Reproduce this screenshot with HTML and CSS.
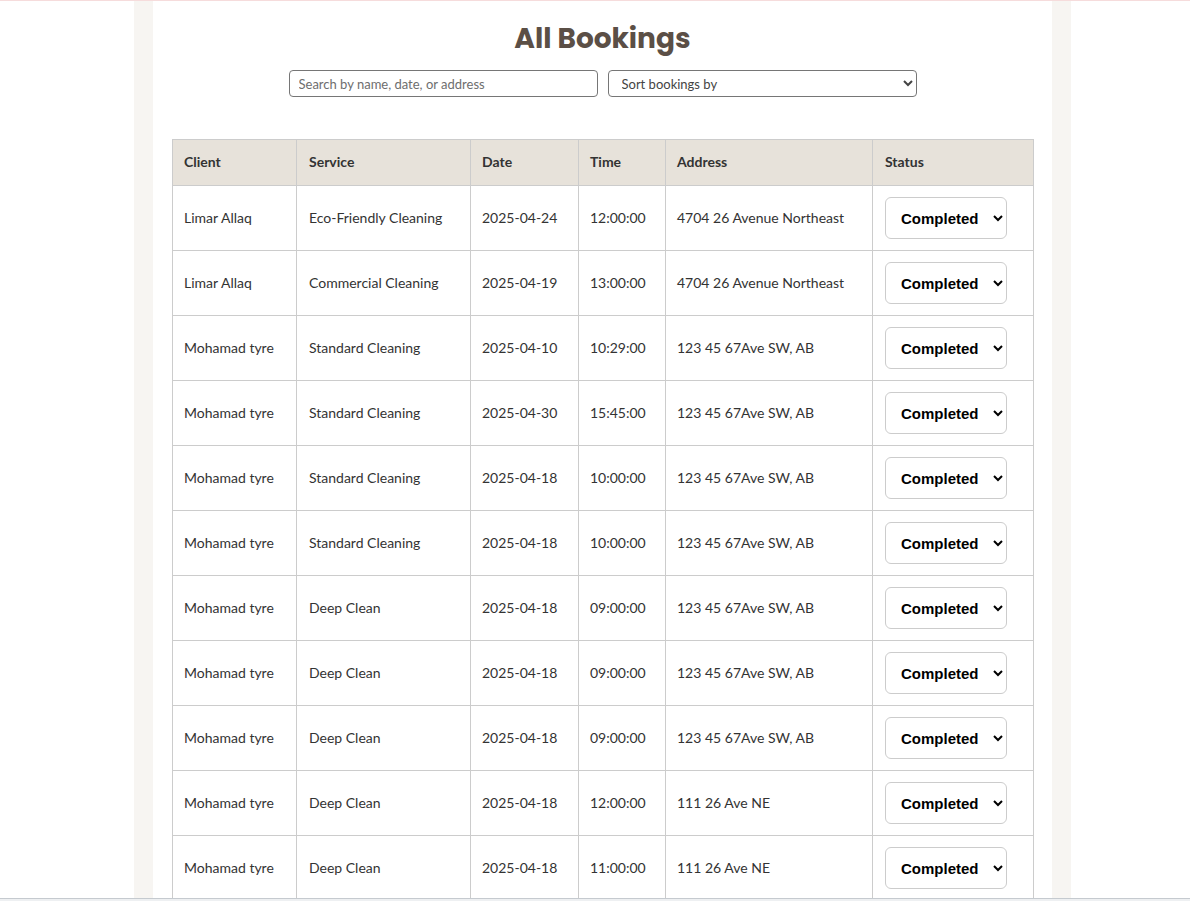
FILE: index.html
```html
<!DOCTYPE html>
<html lang="en">
<head>
<meta charset="utf-8">
<title>All Bookings</title>
<link rel="stylesheet" href="styles.css">
</head>
<body>
<div class="topline"></div>
<div class="page">
  <main class="panel">
    <h1 class="title">All Bookings</h1>
    <div class="controls">
      <input class="search" type="text" placeholder="Search by name, date, or address">
      <select class="sort">
        <option>Sort bookings by</option>
        <option>Date</option>
        <option>Client</option>
      </select>
    </div>
    <table class="bookings">
      <colgroup>
        <col class="c-client"><col class="c-service"><col class="c-date"><col class="c-time"><col class="c-address"><col class="c-status">
      </colgroup>
      <thead>
        <tr><th>Client</th><th>Service</th><th>Date</th><th>Time</th><th>Address</th><th>Status</th></tr>
      </thead>
      <tbody>
        <tr><td>Limar Allaq</td><td>Eco-Friendly Cleaning</td><td>2025-04-24</td><td>12:00:00</td><td>4704 26 Avenue Northeast</td><td><select class="status"><option>Completed</option><option>Pending</option><option>Cancelled</option></select></td></tr>
        <tr><td>Limar Allaq</td><td>Commercial Cleaning</td><td>2025-04-19</td><td>13:00:00</td><td>4704 26 Avenue Northeast</td><td><select class="status"><option>Completed</option><option>Pending</option><option>Cancelled</option></select></td></tr>
        <tr><td>Mohamad tyre</td><td>Standard Cleaning</td><td>2025-04-10</td><td>10:29:00</td><td>123 45 67Ave SW, AB</td><td><select class="status"><option>Completed</option><option>Pending</option><option>Cancelled</option></select></td></tr>
        <tr><td>Mohamad tyre</td><td>Standard Cleaning</td><td>2025-04-30</td><td>15:45:00</td><td>123 45 67Ave SW, AB</td><td><select class="status"><option>Completed</option><option>Pending</option><option>Cancelled</option></select></td></tr>
        <tr><td>Mohamad tyre</td><td>Standard Cleaning</td><td>2025-04-18</td><td>10:00:00</td><td>123 45 67Ave SW, AB</td><td><select class="status"><option>Completed</option><option>Pending</option><option>Cancelled</option></select></td></tr>
        <tr><td>Mohamad tyre</td><td>Standard Cleaning</td><td>2025-04-18</td><td>10:00:00</td><td>123 45 67Ave SW, AB</td><td><select class="status"><option>Completed</option><option>Pending</option><option>Cancelled</option></select></td></tr>
        <tr><td>Mohamad tyre</td><td>Deep Clean</td><td>2025-04-18</td><td>09:00:00</td><td>123 45 67Ave SW, AB</td><td><select class="status"><option>Completed</option><option>Pending</option><option>Cancelled</option></select></td></tr>
        <tr><td>Mohamad tyre</td><td>Deep Clean</td><td>2025-04-18</td><td>09:00:00</td><td>123 45 67Ave SW, AB</td><td><select class="status"><option>Completed</option><option>Pending</option><option>Cancelled</option></select></td></tr>
        <tr><td>Mohamad tyre</td><td>Deep Clean</td><td>2025-04-18</td><td>09:00:00</td><td>123 45 67Ave SW, AB</td><td><select class="status"><option>Completed</option><option>Pending</option><option>Cancelled</option></select></td></tr>
        <tr><td>Mohamad tyre</td><td>Deep Clean</td><td>2025-04-18</td><td>12:00:00</td><td>111 26 Ave NE</td><td><select class="status"><option>Completed</option><option>Pending</option><option>Cancelled</option></select></td></tr>
        <tr><td>Mohamad tyre</td><td>Deep Clean</td><td>2025-04-18</td><td>11:00:00</td><td>111 26 Ave NE</td><td><select class="status"><option>Completed</option><option>Pending</option><option>Cancelled</option></select></td></tr>
        <tr><td>Mohamad tyre</td><td>Deep Clean</td><td>2025-04-18</td><td>11:00:00</td><td>111 26 Ave NE</td><td><select class="status"><option>Completed</option><option>Pending</option><option>Cancelled</option></select></td></tr>
      </tbody>
    </table>
  </main>
</div>
<div class="bottombar"></div>
</body>
</html>
```
FILE: styles.css
```css
html, body {
  margin: 0;
  padding: 0;
  background: #ffffff;
}
body {
  font-family: Lato, "Liberation Sans", sans-serif;
  color: #333333;
}
.topline {
  height: 1px;
  background: #f6dcdc;
}
.page {
  width: 899px;
  margin-left: 134px;
  padding: 0 19px;
  background: #f7f5f2;
  display: flow-root;
}
.panel {
  background: #ffffff;
  padding: 18px 19px 40px;
  display: flow-root;
}
.title {
  margin: 0;
  font-family: Poppins, Inter, "Open Sans", sans-serif;
  font-weight: 700;
  font-size: 28px;
  line-height: 40px;
  color: #5b4f46;
  text-align: center;
}
.controls {
  display: flex;
  justify-content: center;
  gap: 10px;
  margin-top: 11px;
}
.search, .sort {
  box-sizing: border-box;
  width: 309px;
  height: 27px;
  border: 1px solid #767676;
  border-radius: 4px;
  font-family: Lato, sans-serif;
  font-size: 13px;
  background: #ffffff;
}
.search {
  padding: 0 9px;
  color: #333;
}
.search::placeholder {
  color: #6e6e6e;
}
.sort {
  padding: 0 6px 0 9px;
  color: #444;
}
.bookings {
  margin-top: 42px;
  width: 861px;
  border-collapse: collapse;
  table-layout: fixed;
  font-size: 14px;
}
.c-client { width: 124px; }
.c-service { width: 174px; }
.c-date { width: 108px; }
.c-time { width: 87px; }
.c-address { width: 207px; }
.c-status { width: 161px; }
.bookings th, .bookings td {
  border: 1px solid #cccccc;
  text-align: left;
  vertical-align: middle;
  line-height: 17px;
}
.bookings th {
  background: #e7e2da;
  font-weight: 700;
  padding: 13px 11px 15px;
  color: #333;
}
.bookings td {
  padding: 10px 11px 12px;
  height: 42px;
  color: #333;
}
.bookings th:nth-child(2), .bookings td:nth-child(2),
.bookings th:nth-child(6), .bookings td:nth-child(6) {
  padding-left: 12px;
}
.bookings td:nth-child(6) {
  padding-top: 11px;
  padding-bottom: 11px;
}
.status {
  box-sizing: border-box;
  width: 122px;
  height: 42px;
  border: 1px solid #cccccc;
  border-radius: 6px;
  background: #ffffff;
  font-family: "Liberation Sans", Arial, sans-serif;
  font-weight: 700;
  font-size: 15px;
  color: #000;
  padding: 0 6px 0 11px;
}
.bottombar {
  position: fixed;
  left: 0;
  right: 0;
  bottom: 0;
  height: 2px;
  background: #eef0f2;
  border-top: 1px solid #c5cacf;
}
```
